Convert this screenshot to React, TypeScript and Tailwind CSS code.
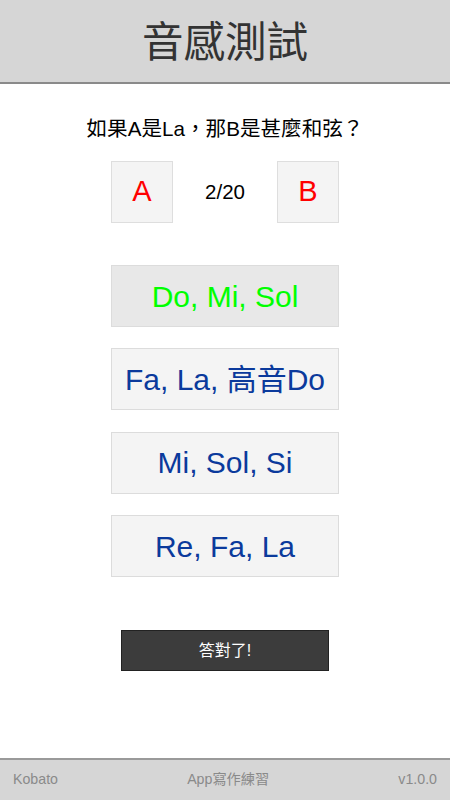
const font = "font-['Liberation_Sans','Noto_Sans_CJK_TC',sans-serif]";

const options = [
  { label: "Do, Mi, Sol", correct: true },
  { label: "Fa, La, 高音Do", correct: false },
  { label: "Mi, Sol, Si", correct: false },
  { label: "Re, Fa, La", correct: false },
];

export default function App() {
  return (
    <div className={`${font} flex h-[800px] w-[450px] flex-col bg-white`}>
      <header className="flex h-[84px] items-center justify-center border-b-2 border-[#8a8a8a] bg-[#d6d6d6] pt-[3px]">
        <h1 className="text-[41.5px] leading-none text-[#333]">音感測試</h1>
      </header>

      <p className="mt-[31px] text-center text-[20.6px] leading-[28px] text-black">
        如果A是La，那B是甚麼和弦？
      </p>

      <div className="mt-[18px] flex items-center justify-center">
        <div className="flex h-[62px] w-[62px] items-center justify-center border border-[#dedede] bg-[#f4f4f4] text-[29px] text-[#ff0000]">
          A
        </div>
        <div className="w-[104px] text-center text-[20.5px] text-black">2/20</div>
        <div className="flex h-[62px] w-[62px] items-center justify-center border border-[#dedede] bg-[#f4f4f4] text-[29px] text-[#ff0000]">
          B
        </div>
      </div>

      <div className="mt-[42px] flex flex-col items-center gap-[21.4px]">
        {options.map((o) => (
          <button
            key={o.label}
            className={`flex h-[62px] w-[228px] items-center justify-center border border-[#dcdcdc] text-[30px] ${
              o.correct
                ? "bg-[#e8e8e8] text-[#00ff00]"
                : "bg-[#f4f4f4] text-[#0b3a9c]"
            }`}
          >
            {o.label}
          </button>
        ))}
      </div>

      <div className="mt-[53px] flex justify-center">
        <button className="h-[41px] w-[208px] border border-[#222] bg-[#3c3c3c] text-[16px] text-white">
          答對了!
        </button>
      </div>

      <footer className="mt-auto flex h-[42px] items-center justify-between border-t-2 border-[#9a9a9a] bg-[#d6d6d6] px-[13px] text-[14.2px] text-[#8a8a8a]">
        <span>Kobato</span>
        <span>App寫作練習</span>
        <span>v1.0.0</span>
      </footer>
    </div>
  );
}
